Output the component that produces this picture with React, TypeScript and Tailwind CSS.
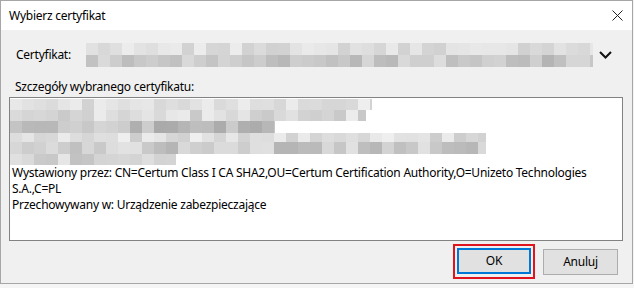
import React from "react"

function rand(seed: number) {
  let s = seed
  return () => {
    s = (s * 1103515245 + 12345) % 2147483648
    return s / 2147483648
  }
}

type Band = { h: number; w: number; lo: number; hi: number }

function Pixels({ bands, seed, cell = 12 }: { bands: Band[]; seed: number; cell?: number }) {
  const r = rand(seed)
  const width = Math.max(...bands.map((b) => b.w))
  const height = bands.reduce((a, b) => a + b.h, 0)
  const rects: React.ReactElement[] = []
  let y = 0
  bands.forEach((b, bi) => {
    for (let x = 0; x < b.w; x += cell) {
      const g = Math.round(b.lo + r() * (b.hi - b.lo))
      rects.push(
        <rect
          key={bi + "-" + x}
          x={x}
          y={y}
          width={Math.min(cell, b.w - x)}
          height={b.h}
          fill={`rgb(${g},${g},${g})`}
        />
      )
    }
    y += b.h
  })
  return (
    <svg width={width} height={height} className="block">
      {rects}
    </svg>
  )
}

export default function App() {
  return (
    <div className="w-[634px] h-[288px] bg-[#f5f5f5] text-[12px] tracking-[-0.25px] text-black font-['Noto_Sans',sans-serif] leading-[16px]">
      <div className="w-[633px] h-[284px] border border-[#a6a6a6] flex flex-col">
        <div className="h-[29px] bg-white flex items-center justify-between pl-[8px] pr-[9px]">
          <span>Wybierz certyfikat</span>
          <svg width="11" height="11" viewBox="0 0 11 11" className="mr-[0px]">
            <path d="M0.5 0.5 L10.5 10.5 M10.5 0.5 L0.5 10.5" stroke="#222" strokeWidth="1" />
          </svg>
        </div>
        <div className="flex-1 bg-[#f0f0f0] flex flex-col">
          <div className="mt-[13px] h-[24px] flex items-center pl-[15px]">
            <span className="w-[70px]">Certyfikat:</span>
            <Pixels
              seed={7}
              bands={[
                { h: 12, w: 507, lo: 208, hi: 236 },
                { h: 12, w: 507, lo: 180, hi: 224 },
              ]}
            />
            <svg width="13" height="8" viewBox="0 0 13 8" className="ml-[6px]">
              <path d="M1 1 L6.5 6.5 L12 1" fill="none" stroke="#111" strokeWidth="2" />
            </svg>
          </div>
          <div className="mt-[12px] pl-[14px]">Szczegóły wybranego certyfikatu:</div>
          <div className="mt-[2px] ml-[8px] w-[614px] h-[144px] bg-white border border-[#828282] pt-px">
            <Pixels
              seed={21}
              bands={[
                { h: 11, w: 362, lo: 208, hi: 238 },
                { h: 11, w: 356, lo: 196, hi: 236 },
                { h: 12, w: 265, lo: 170, hi: 220 },
                { h: 9, w: 476, lo: 204, hi: 240 },
                { h: 12, w: 476, lo: 180, hi: 226 },
                { h: 11, w: 166, lo: 194, hi: 232 },
              ]}
            />
            <div className="pl-[2px]">
              <div>
                Wystawiony przez: CN=Certum Class I CA SHA2,OU=Certum Certification Authority,O=Unizeto Technologies
              </div>
              <div>S.A.,C=PL</div>
              <div>Przechowywany w: Urządzenie zabezpieczające</div>
            </div>
          </div>
          <div className="mt-[3px] flex items-start justify-end pr-[14px]">
            <div className="w-[82px] h-[35px] border-2 border-[#e0141e] flex items-start justify-center pt-[2px]">
              <button className="w-[74px] h-[26px] border-2 border-[#0078d7] bg-[#e1e1e1]">OK</button>
            </div>
            <button className="ml-[8px] mt-[5px] w-[75px] h-[26px] border border-[#adadad] bg-[#e1e1e1]">
              Anuluj
            </button>
          </div>
        </div>
      </div>
    </div>
  )
}
